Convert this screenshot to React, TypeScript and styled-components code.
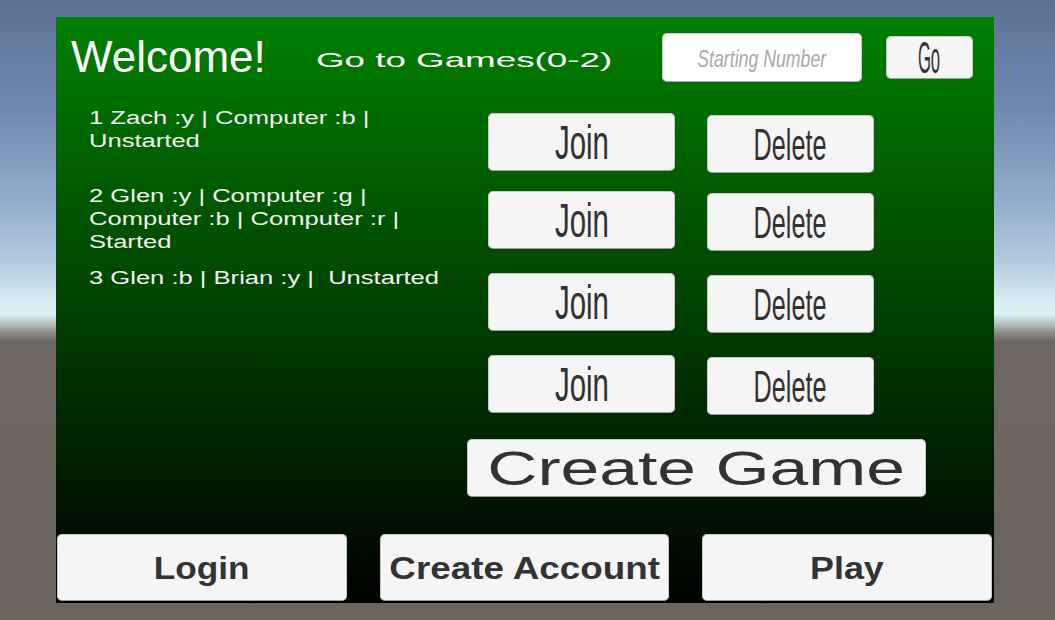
import React from "react";
import styled, { createGlobalStyle } from "styled-components";

const Global = createGlobalStyle`
  html, body { margin: 0; padding: 0; }
  body {
    width: 1055px;
    height: 620px;
    overflow: hidden;
    font-family: "Liberation Sans", Arial, sans-serif;
  }
`;

const Scene = styled.div`
  width: 1055px;
  height: 620px;
  box-sizing: border-box;
  padding: 17px 0 0 56px;
  background: linear-gradient(
    to bottom,
    #5b7094 0px,
    #7189b0 110px,
    #93acce 200px,
    #b4cade 262px,
    #d9eef3 303px,
    #dcf1f4 314px,
    #b4c0c2 324px,
    #8a8886 333px,
    #6d6661 342px,
    #6b635e 620px
  );
`;

const Panel = styled.main`
  width: 938px;
  height: 586px;
  background: linear-gradient(to bottom, #008000 0%, #000000 100%);
  display: flex;
  flex-direction: column;
`;

const Header = styled.header`
  display: flex;
  align-items: center;
  height: 80px;
  padding-left: 15px;
`;

const Title = styled.h1`
  margin: 0;
  width: 196px;
  font-size: 44px;
  font-weight: 400;
  line-height: 50px;
  color: #ffffff;
`;

const Stretch = styled.span<{ $sx: number; $origin?: string }>`
  display: inline-block;
  white-space: pre;
  transform: scaleX(${(p) => p.$sx});
  transform-origin: ${(p) => p.$origin ?? "center"} center;
`;

const GoLabel = styled.div`
  margin-left: 49px;
  width: 346px;
  padding-top: 6px;
  font-size: 21px;
  line-height: 24px;
  color: #ffffff;
`;

const Field = styled.div`
  width: 200px;
  height: 49px;
  box-sizing: border-box;
  display: flex;
  align-items: center;
  justify-content: center;
  background: #ffffff;
  border: 1px solid #cfcfcf;
  border-bottom-color: #a9a9a9;
  border-radius: 5px;
  padding-top: 5px;
  font-size: 23px;
  font-style: italic;
  line-height: 1;
  color: #a9a9a9;
`;

const ButtonBase = styled.button`
  box-sizing: border-box;
  display: flex;
  align-items: center;
  justify-content: center;
  padding: 0;
  margin: 0;
  background: #f5f5f5;
  border: 1px solid #c8c8c8;
  border-bottom-color: #9d9d9d;
  border-radius: 5px;
  color: #323232;
  font-family: "Liberation Sans", Arial, sans-serif;
  font-weight: 400;
  line-height: 1;
  cursor: pointer;
`;

const GoButton = styled(ButtonBase)`
  margin-left: 24px;
  width: 87px;
  height: 43px;
  font-size: 45px;
`;

const GameGrid = styled.section`
  display: grid;
  grid-template-columns: 367px 187px 167px;
  grid-template-rows: 78px 82px 82px 58px;
  column-gap: 32px;
  margin-top: 16px;
  padding-left: 33px;
`;

const GameInfo = styled.div`
  margin-top: -6px;
  font-size: 18px;
  line-height: 23px;
  color: #f4f4f4;
`;

const JoinButton = styled(ButtonBase)`
  height: 58px;
  font-size: 49px;
`;

const DeleteButton = styled(ButtonBase)`
  height: 58px;
  margin-top: 2px;
  font-size: 45px;
`;

const CreateRow = styled.div`
  display: flex;
  margin-top: 26px;
  padding-left: 411px;
`;

const CreateButton = styled(ButtonBase)`
  width: 459px;
  height: 58px;
  font-size: 48px;
  padding-top: 2px;
`;

const Spacer = styled.div`
  flex: 1;
`;

const BottomBar = styled.nav`
  display: grid;
  grid-template-columns: repeat(3, 1fr);
  column-gap: 33px;
  padding: 0 2px 2px 1px;
`;

const NavButton = styled(ButtonBase)`
  height: 67px;
  font-size: 32px;
  font-weight: 700;
  color: #333333;
`;

const games: string[] = [
  "1 Zach :y | Computer :b |\nUnstarted",
  "2 Glen :y | Computer :g |\nComputer :b | Computer :r |\nStarted",
  "3 Glen :b | Brian :y |  Unstarted",
  "",
];

export default function App() {
  return (
    <>
      <Global />
      <Scene>
        <Panel>
          <Header>
            <Title>Welcome!</Title>
            <GoLabel>
              <Stretch $sx={1.75} $origin="left">
                Go to Games(0-2)
              </Stretch>
            </GoLabel>
            <Field>
              <Stretch $sx={0.77}>Starting Number</Stretch>
            </Field>
            <GoButton>
              <Stretch $sx={0.37}>Go</Stretch>
            </GoButton>
          </Header>

          <GameGrid>
            {games.map((g, i) => (
              <React.Fragment key={i}>
                <GameInfo>
                  <Stretch $sx={1.42} $origin="left">
                    {g}
                  </Stretch>
                </GameInfo>
                <JoinButton>
                  <Stretch $sx={0.6}>Join</Stretch>
                </JoinButton>
                <DeleteButton>
                  <Stretch $sx={0.56}>Delete</Stretch>
                </DeleteButton>
              </React.Fragment>
            ))}
          </GameGrid>

          <CreateRow>
            <CreateButton>
              <Stretch $sx={1.45}>Create Game</Stretch>
            </CreateButton>
          </CreateRow>

          <Spacer />

          <BottomBar>
            <NavButton>
              <Stretch $sx={1.1}>Login</Stretch>
            </NavButton>
            <NavButton>
              <Stretch $sx={1.15}>Create Account</Stretch>
            </NavButton>
            <NavButton>
              <Stretch $sx={1.12}>Play</Stretch>
            </NavButton>
          </BottomBar>
        </Panel>
      </Scene>
    </>
  );
}
